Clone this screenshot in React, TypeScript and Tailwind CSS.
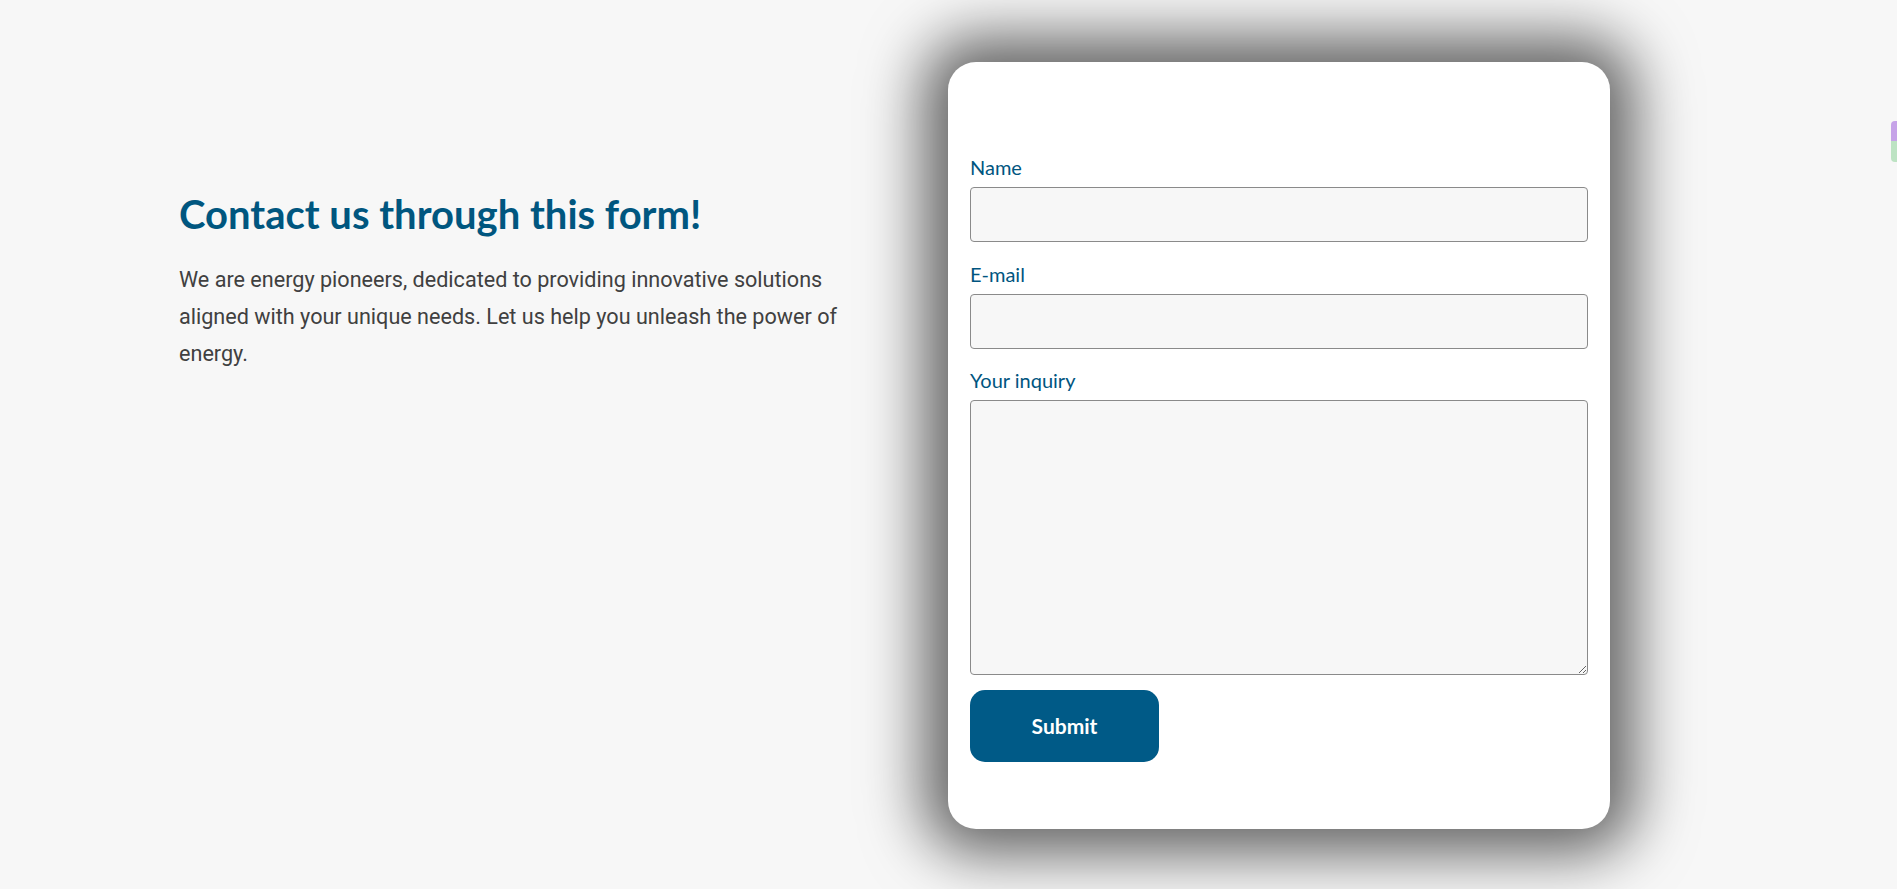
import React from 'react';

const labelCls = "block text-[20px] leading-[22px] text-[#00557f] mb-[9px] font-['Lato',sans-serif]";
const fieldCls = "block w-full bg-[#f7f7f7] border border-[#8a8a8a] rounded-[4px] outline-none";

const App: React.FC = () => {
    return (
        <div className="relative min-h-[889px] w-full bg-[#f7f7f7] overflow-hidden">
            <div className="flex items-start pl-[179px] pt-[62px]">
                <div className="w-[680px] mr-[89px] pt-[129px]">
                    <h1 className="text-[40px] leading-[46px] font-bold text-[#00567f] font-['Lato',sans-serif]">
                        Contact us through this form!
                    </h1>
                    <p className="mt-[24px] text-[21.6px] leading-[37px] text-[#404040] font-['Roboto',sans-serif]">
                        We are energy pioneers, dedicated to providing innovative solutions aligned with your unique needs. Let us help you unleash the power of energy.
                    </p>
                </div>

                <div className="w-[662px] h-[767px] bg-white rounded-[28px] shadow-[0_0_60px_25px_rgba(0,0,0,0.6)] px-[22px] pt-[94px]">
                    <form onSubmit={(e) => e.preventDefault()}>
                        <label className={labelCls}>Name</label>
                        <input type="text" className={`${fieldCls} h-[55px]`} />

                        <label className={`${labelCls} mt-[21px]`}>E-mail</label>
                        <input type="email" className={`${fieldCls} h-[55px]`} />

                        <label className={`${labelCls} mt-[20px]`}>Your inquiry</label>
                        <textarea className={`${fieldCls} h-[275px] resize-y`} />

                        <button
                            type="submit"
                            className="mt-[15px] w-[189px] h-[72px] rounded-[15px] bg-[#005a87] text-white text-[21px] font-bold font-['Lato',sans-serif]"
                        >
                            Submit
                        </button>
                    </form>
                </div>
            </div>

            {/* side widget tab */}
            <div className="absolute right-0 top-[121px] w-[6px] h-[41px] rounded-l-[4px] overflow-hidden flex flex-col">
                <div className="h-[20px] bg-[#c6a3e8]" />
                <div className="flex-1 bg-[#bde3c3]" />
            </div>
        </div>
    );
};

export default App;
